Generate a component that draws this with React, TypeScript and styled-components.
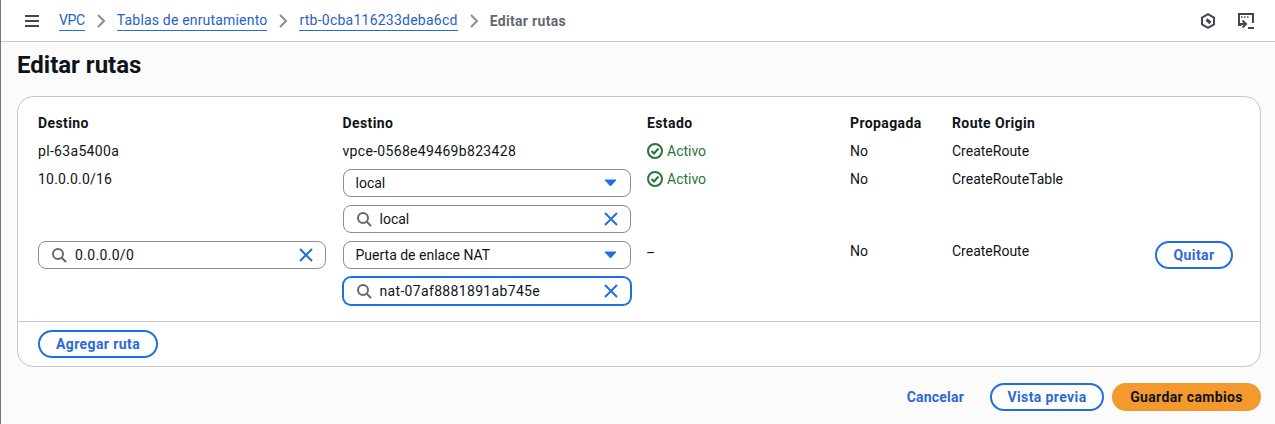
import React from "react";
import styled, { createGlobalStyle } from "styled-components";

const Global = createGlobalStyle`
  html, body { margin: 0; padding: 0; background: #fbfbfc; }
  body { font-family: Roboto, "Noto Sans", sans-serif; font-size: 14px; color: #0f141a; }
`;

const Page = styled.div`
  width: 1275px;
  height: 424px;
  box-sizing: border-box;
  border-left: 1px solid #777;
  overflow: hidden;
  display: flex;
  flex-direction: column;
`;

const TopBar = styled.header`
  height: 41px;
  flex: none;
  box-sizing: border-box;
  display: flex;
  align-items: center;
  background: #fff;
  box-shadow: 0 1px 0 #c6c6cd;
  padding: 1px 21px 0 23px;
`;

const Menu = styled.span`
  display: flex;
  margin-right: 19px;
`;

const Crumbs = styled.nav`
  display: flex;
  align-items: center;
  flex: 1;
`;

const CrumbLink = styled.a<{ $spacing: number }>`
  color: #295fc9;
  font-size: 14px;
  line-height: 19px;
  letter-spacing: ${(p) => p.$spacing}px;
  border-bottom: 1px solid #1f6fe0;
`;

const CrumbCurrent = styled.span`
  color: #656871;
  font-size: 14px;
  font-weight: 700;
  letter-spacing: 0.32px;
`;

const Sep = styled.span`
  display: flex;
  margin: 0 8px;
`;

const TopIcons = styled.div`
  display: flex;
  align-items: center;
  gap: 22px;
`;

const Main = styled.main`
  flex: 1;
  padding: 10px 14px 0 16px;
  display: flex;
  flex-direction: column;
`;

const Title = styled.h1`
  margin: 0;
  font-size: 24px;
  line-height: 28px;
  font-weight: 700;
  color: #0f141a;
  height: 28px;
`;

const Card = styled.section`
  margin-top: 17px;
  height: 271px;
  box-sizing: border-box;
  background: #fff;
  border: 1px solid #c6c6cd;
  border-radius: 16px;
  display: flex;
  flex-direction: column;
`;

const Table = styled.div`
  flex: 1;
  padding: 16px 20px 0;
  display: grid;
  grid-template-columns: 304.5px 304.5px 203px 102px 1fr;
  grid-auto-rows: min-content;
`;

const Head = styled.div`
  font-weight: 700;
  font-size: 14px;
  line-height: 20px;
  height: 20px;
  letter-spacing: 0.4px;
`;

const Cell = styled.div`
  padding-top: 8px;
  line-height: 20px;
  font-size: 14px;
  min-width: 0;
`;

const Id = styled.span<{ $spacing: number }>`
  letter-spacing: ${(p) => p.$spacing}px;
`;

const Dash = styled.span`
  position: relative;
  top: 2px;
  left: -1px;
`;

const Stack = styled.div`
  width: 288px;
  display: flex;
  flex-direction: column;
  gap: 8px;
  padding-top: 8px;
`;

const Field = styled.div<{ $focus?: boolean }>`
  height: 28px;
  width: 288px;
  box-sizing: border-box;
  background: #fff;
  border: 1px solid ${(p) => (p.$focus ? "#1f6fe0" : "#8c8c94")};
  box-shadow: ${(p) => (p.$focus ? "0 0 0 1px #1f6fe0" : "none")};
  border-radius: 8px;
  display: flex;
  align-items: center;
  padding: 0 11px 0 12px;
  font-size: 14px;
  line-height: 20px;
`;

const FieldText = styled.span<{ $icon?: boolean; $id?: boolean }>`
  flex: 1;
  margin-left: ${(p) => (p.$icon ? 8 : 0)}px;
  white-space: nowrap;
  letter-spacing: ${(p) => (p.$id ? 0.33 : 0)}px;
`;

const Status = styled.span`
  display: flex;
  align-items: center;
  gap: 4px;
  color: #29733d;
`;

const RowAction = styled.div`
  padding-top: 8px;
  display: flex;
  justify-content: flex-end;
  padding-right: 7px;
`;

const OriginText = styled.span`
  flex: 1;
  line-height: 20px;
`;

const Pill = styled.button<{ $w?: number }>`
  height: 28px;
  width: ${(p) => (p.$w ? `${p.$w}px` : "auto")};
  padding: 0;
  box-sizing: border-box;
  background: #fff;
  border: 2px solid #1f6fe0;
  border-radius: 20px;
  color: #2a69d6;
  font: 700 14px/20px Roboto, sans-serif;
  letter-spacing: 0.4px;
`;

const CardFoot = styled.div`
  height: 45px;
  flex: none;
  box-sizing: border-box;
  border-top: 1px solid #c6c6cd;
  padding: 8px 20px;
`;

const Actions = styled.div`
  margin-top: 16px;
  display: flex;
  justify-content: flex-end;
  align-items: center;
`;

const TextBtn = styled.button`
  border: 0;
  background: none;
  padding: 0;
  margin-right: 26px;
  color: #2a69d6;
  font: 700 14px/20px Roboto, sans-serif;
  letter-spacing: 0.2px;
`;

const Primary = styled.button`
  height: 28px;
  width: 149px;
  margin-left: 8px;
  padding: 0;
  border: 0;
  border-radius: 20px;
  background: #f3992d;
  color: #0f141a;
  font: 700 14px/20px Roboto, sans-serif;
  letter-spacing: 0.35px;
`;

const Search = () => (
  <svg width="16" height="16" viewBox="0 0 16 16" fill="none" stroke="#656871" strokeWidth="2">
    <circle cx="7" cy="7" r="5" />
    <path d="M10.7 10.7 15 15" />
  </svg>
);

const Clear = () => (
  <svg width="16" height="16" viewBox="0 0 16 16" fill="none" stroke="#1f6fe0" strokeWidth="2">
    <path d="m2 2 12 12M14 2 2 14" />
  </svg>
);

const Caret = () => (
  <svg width="16" height="16" viewBox="0 0 16 16">
    <path d="M2 5h11L7.5 11z" fill="#1f6fe0" stroke="#1f6fe0" strokeLinejoin="round" />
  </svg>
);

const Check = () => (
  <svg width="16" height="16" viewBox="0 0 16 16" fill="none" stroke="#29733d" strokeWidth="2">
    <circle cx="8" cy="8" r="7" />
    <path d="m4.5 8 2.5 2.5 4.5-5" />
  </svg>
);

const Chevron = () => (
  <svg width="16" height="16" viewBox="0 0 16 16" fill="none" stroke="#8c8c94" strokeWidth="2">
    <path d="m5 2 6 6-6 6" />
  </svg>
);

const SelectField = ({ value }: { value: string }) => (
  <Field>
    <FieldText>{value}</FieldText>
    <Caret />
  </Field>
);

const SearchField = ({ value, focus, id }: { value: string; focus?: boolean; id?: boolean }) => (
  <Field $focus={focus}>
    <Search />
    <FieldText $icon $id={id}>{value}</FieldText>
    <Clear />
  </Field>
);

export default function App() {
  return (
    <Page>
      <Global />
      <TopBar>
        <Menu>
          <svg width="16" height="16" viewBox="0 0 16 16" fill="none" stroke="#424650" strokeWidth="2">
            <path d="M1 3h14M1 8h14M1 13h14" />
          </svg>
        </Menu>
        <Crumbs>
          <CrumbLink $spacing={-0.35}>VPC</CrumbLink>
          <Sep><Chevron /></Sep>
          <CrumbLink $spacing={0.18}>Tablas de enrutamiento</CrumbLink>
          <Sep><Chevron /></Sep>
          <CrumbLink $spacing={0.24}>rtb-0cba116233deba6cd</CrumbLink>
          <Sep><Chevron /></Sep>
          <CrumbCurrent>Editar rutas</CrumbCurrent>
        </Crumbs>
        <TopIcons>
          <svg width="16" height="16" viewBox="0 0 16 16" fill="none" stroke="#424650" strokeWidth="2">
            <path d="M8 1.2 14 4.6v6.8L8 14.8 2 11.4V4.6z" strokeLinejoin="round" />
            <path d="M6.5 6.5 10.5 10" strokeWidth="3" />
          </svg>
          <svg width="16" height="16" viewBox="0 0 16 16" fill="none" stroke="#424650" strokeWidth="2">
            <path d="M3.5 12H1V1h14v9" />
            <path d="M3 4h1.5M6 4h1.5M9 4h1.5" strokeWidth="1.5" />
            <path d="m4.5 7.5 3.5 3.5-3.5 3.5M1.5 11H7" />
            <path d="M10 15h6" />
          </svg>
        </TopIcons>
      </TopBar>
      <Main>
        <Title>Editar rutas</Title>
        <Card>
          <Table>
            <Head>Destino</Head>
            <Head>Destino</Head>
            <Head>Estado</Head>
            <Head>Propagada</Head>
            <Head>Route Origin</Head>

            <Cell><Id $spacing={0.32}>pl-63a5400a</Id></Cell>
            <Cell><Id $spacing={0.32}>vpce-0568e49469b823428</Id></Cell>
            <Cell><Status><Check />Activo</Status></Cell>
            <Cell>No</Cell>
            <Cell>CreateRoute</Cell>

            <Cell><Id $spacing={0.2}>10.0.0.0/16</Id></Cell>
            <Stack>
              <SelectField value="local" />
              <SearchField value="local" />
            </Stack>
            <Cell><Status><Check />Activo</Status></Cell>
            <Cell>No</Cell>
            <Cell>CreateRouteTable</Cell>

            <Stack>
              <SearchField value="0.0.0.0/0" id />
            </Stack>
            <Stack>
              <SelectField value="Puerta de enlace NAT" />
              <SearchField value="nat-07af8881891ab745e" focus id />
            </Stack>
            <Cell><Dash>–</Dash></Cell>
            <Cell>No</Cell>
            <RowAction>
              <OriginText>CreateRoute</OriginText>
              <Pill $w={78}>Quitar</Pill>
            </RowAction>
          </Table>
          <CardFoot>
            <Pill $w={120}>Agregar ruta</Pill>
          </CardFoot>
        </Card>
        <Actions>
          <TextBtn>Cancelar</TextBtn>
          <Pill $w={114}>Vista previa</Pill>
          <Primary>Guardar cambios</Primary>
        </Actions>
      </Main>
    </Page>
  );
}
